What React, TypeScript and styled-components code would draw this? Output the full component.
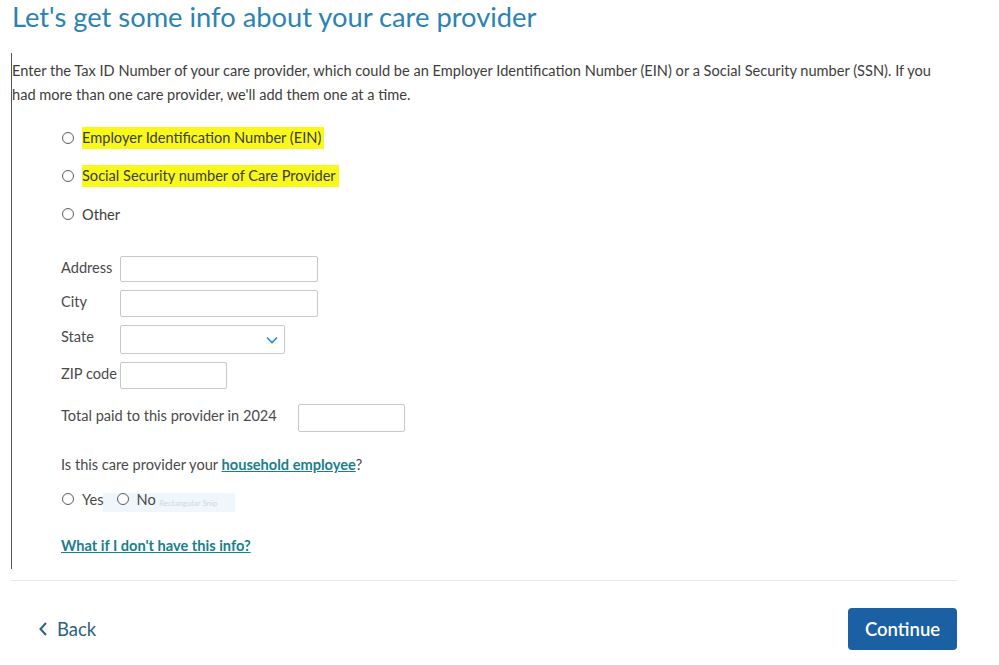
import React from "react";
import styled, {createGlobalStyle} from "styled-components";

const GlobalStyle = createGlobalStyle`
  html, body {
    margin: 0;
    padding: 0;
    background: #ffffff;
  }

  body {
    font-family: Lato, "Open Sans", sans-serif;
    color: #3b3b3b;
  }
`;

const Page = styled.div`
  width: 999px;
  height: 665px;
  padding-left: 11px;
  box-sizing: border-box;
  overflow: hidden;
`;

const Title = styled.h1`
  margin: 0;
  padding: 1px 0 0 1px;
  height: 53px;
  box-sizing: border-box;
  font-size: 27.3px;
  font-weight: 400;
  line-height: 32px;
  color: #2a83b5;
`;

const Section = styled.div`
  border-left: 1px solid #555555;
  padding: 6px 0 0 0;
  height: 516px;
  box-sizing: border-box;
`;

const Intro = styled.p`
  margin: 0;
  width: 935px;
  font-size: 14.6px;
  line-height: 24px;
  color: #3d3d3d;
`;

const Indent = styled.div`
  padding-left: 49px;
`;

const RadioList = styled.div`
  display: flex;
  flex-direction: column;
  padding-top: 12px;
`;

const RadioRow = styled.label`
  display: flex;
  align-items: center;
  height: 38px;
  font-size: 14.6px;
  color: #3d3d3d;
`;

const RadioCircle = styled.span`
  display: inline-block;
  width: 10px;
  height: 10px;
  border: 1px solid #5c5c5c;
  border-radius: 50%;
  margin: 0 8px 0 1px;
  background: #ffffff;
  flex-shrink: 0;
`;

const Marker = styled.span`
  background: #f8f81a;
  padding: 2px 3px 3px 0;
`;

const Fields = styled.div`
  display: grid;
  grid-template-columns: 59px auto;
  row-gap: 8px;
  align-items: center;
  justify-items: start;
  margin-top: 23px;
`;

const FieldLabel = styled.span`
  font-size: 14.6px;
  color: #4a4a4a;
  align-self: start;
  padding-top: 3px;
`;

const TextBox = styled.div<{$w: number; $h?: number}>`
  width: ${p => p.$w}px;
  height: ${p => p.$h ?? 26}px;
  border: 1px solid #c9c9c9;
  border-radius: 2px;
  box-sizing: border-box;
  background: #ffffff;
`;

const SelectBox = styled(TextBox)`
  display: flex;
  align-items: center;
  justify-content: flex-end;
  padding-right: 6px;
`;

const TotalRow = styled.div`
  display: flex;
  align-items: center;
  gap: 21px;
  margin-top: 15px;
`;

const Question = styled.div`
  margin-top: 24px;
  font-size: 14.6px;
  color: #4a4a4a;
`;

const InlineLink = styled.a`
  color: #18808d;
  font-weight: 700;
  text-decoration: underline;
`;

const YesNo = styled.div`
  position: relative;
  display: flex;
  align-items: center;
  margin-top: 16px;
  height: 20px;
  font-size: 14.6px;
  color: #4a4a4a;
`;

const YesNoItem = styled.label`
  display: flex;
  align-items: center;
  margin-right: 12px;
  position: relative;
  z-index: 1;
`;

const SnipGhost = styled.div`
  position: absolute;
  left: 42px;
  top: 4px;
  width: 132px;
  height: 19px;
  background: rgba(228, 240, 250, 0.6);
  font-size: 8px;
  color: #cfd8e0;
  padding: 5px 0 0 56px;
  box-sizing: border-box;
  white-space: nowrap;
`;

const HelpLink = styled.a`
  display: inline-block;
  margin-top: 28px;
  font-size: 14.6px;
  font-weight: 700;
  color: #18808d;
  text-decoration: underline;
`;

const Divider = styled.div`
  margin: 11px 42px 0 0;
  border-top: 1px solid #e6e6e6;
`;

const Footer = styled.div`
  display: flex;
  align-items: center;
  justify-content: space-between;
  margin: 27px 42px 0 0;
`;

const BackButton = styled.button`
  display: flex;
  align-items: center;
  gap: 9px;
  border: none;
  background: none;
  padding: 0 0 0 27px;
  font-family: inherit;
  font-size: 18.5px;
  color: #2d5e8c;
`;

const ContinueButton = styled.button`
  width: 109px;
  height: 42px;
  border: none;
  border-radius: 4px;
  background: #1b60a2;
  color: #ffffff;
  font-family: inherit;
  font-size: 18.5px;
  font-weight: 600;
`;

function Radio({label}: {label: React.ReactNode}) {
    return (
        <RadioRow>
            <RadioCircle/>
            {label}
        </RadioRow>
    );
}

export default function App() {
    return (
        <Page>
            <GlobalStyle/>
            <Title>Let's get some info about your care provider</Title>
            <Section>
                <Intro>
                    Enter the Tax ID Number of your care provider, which could be an Employer Identification Number
                    (EIN) or a Social Security number (SSN). If you had more than one care provider, we'll add them
                    one at a time.
                </Intro>
                <Indent>
                    <RadioList>
                        <Radio label={<Marker>Employer Identification Number (EIN)</Marker>}/>
                        <Radio label={<Marker>Social Security number of Care Provider</Marker>}/>
                        <Radio label="Other"/>
                    </RadioList>

                    <Fields>
                        <FieldLabel>Address</FieldLabel>
                        <TextBox $w={198}/>
                        <FieldLabel>City</FieldLabel>
                        <TextBox $w={198} $h={27}/>
                        <FieldLabel>State</FieldLabel>
                        <SelectBox $w={165} $h={29}>
                            <svg width="12" height="8" viewBox="0 0 12 8" fill="none">
                                <path d="M1 1.5l5 5 5-5" stroke="#2a8bc6" strokeWidth="1.6"/>
                            </svg>
                        </SelectBox>
                        <FieldLabel>ZIP code</FieldLabel>
                        <TextBox $w={107} $h={27}/>
                    </Fields>

                    <TotalRow>
                        <FieldLabel>Total paid to this provider in 2024</FieldLabel>
                        <TextBox $w={107} $h={28}/>
                    </TotalRow>

                    <Question>
                        Is this care provider your <InlineLink>household employee</InlineLink>?
                    </Question>

                    <YesNo>
                        <SnipGhost>Rectangular Snip</SnipGhost>
                        <YesNoItem><RadioCircle/>Yes</YesNoItem>
                        <YesNoItem><RadioCircle/>No</YesNoItem>
                    </YesNo>

                    <HelpLink>What if I don't have this info?</HelpLink>
                </Indent>
            </Section>
            <Divider/>
            <Footer>
                <BackButton>
                    <svg width="10" height="16" viewBox="0 0 10 16" fill="none">
                        <path d="M8 2L2.5 8 8 14" stroke="#2d5e8c" strokeWidth="2"/>
                    </svg>
                    Back
                </BackButton>
                <ContinueButton>Continue</ContinueButton>
            </Footer>
        </Page>
    );
}
